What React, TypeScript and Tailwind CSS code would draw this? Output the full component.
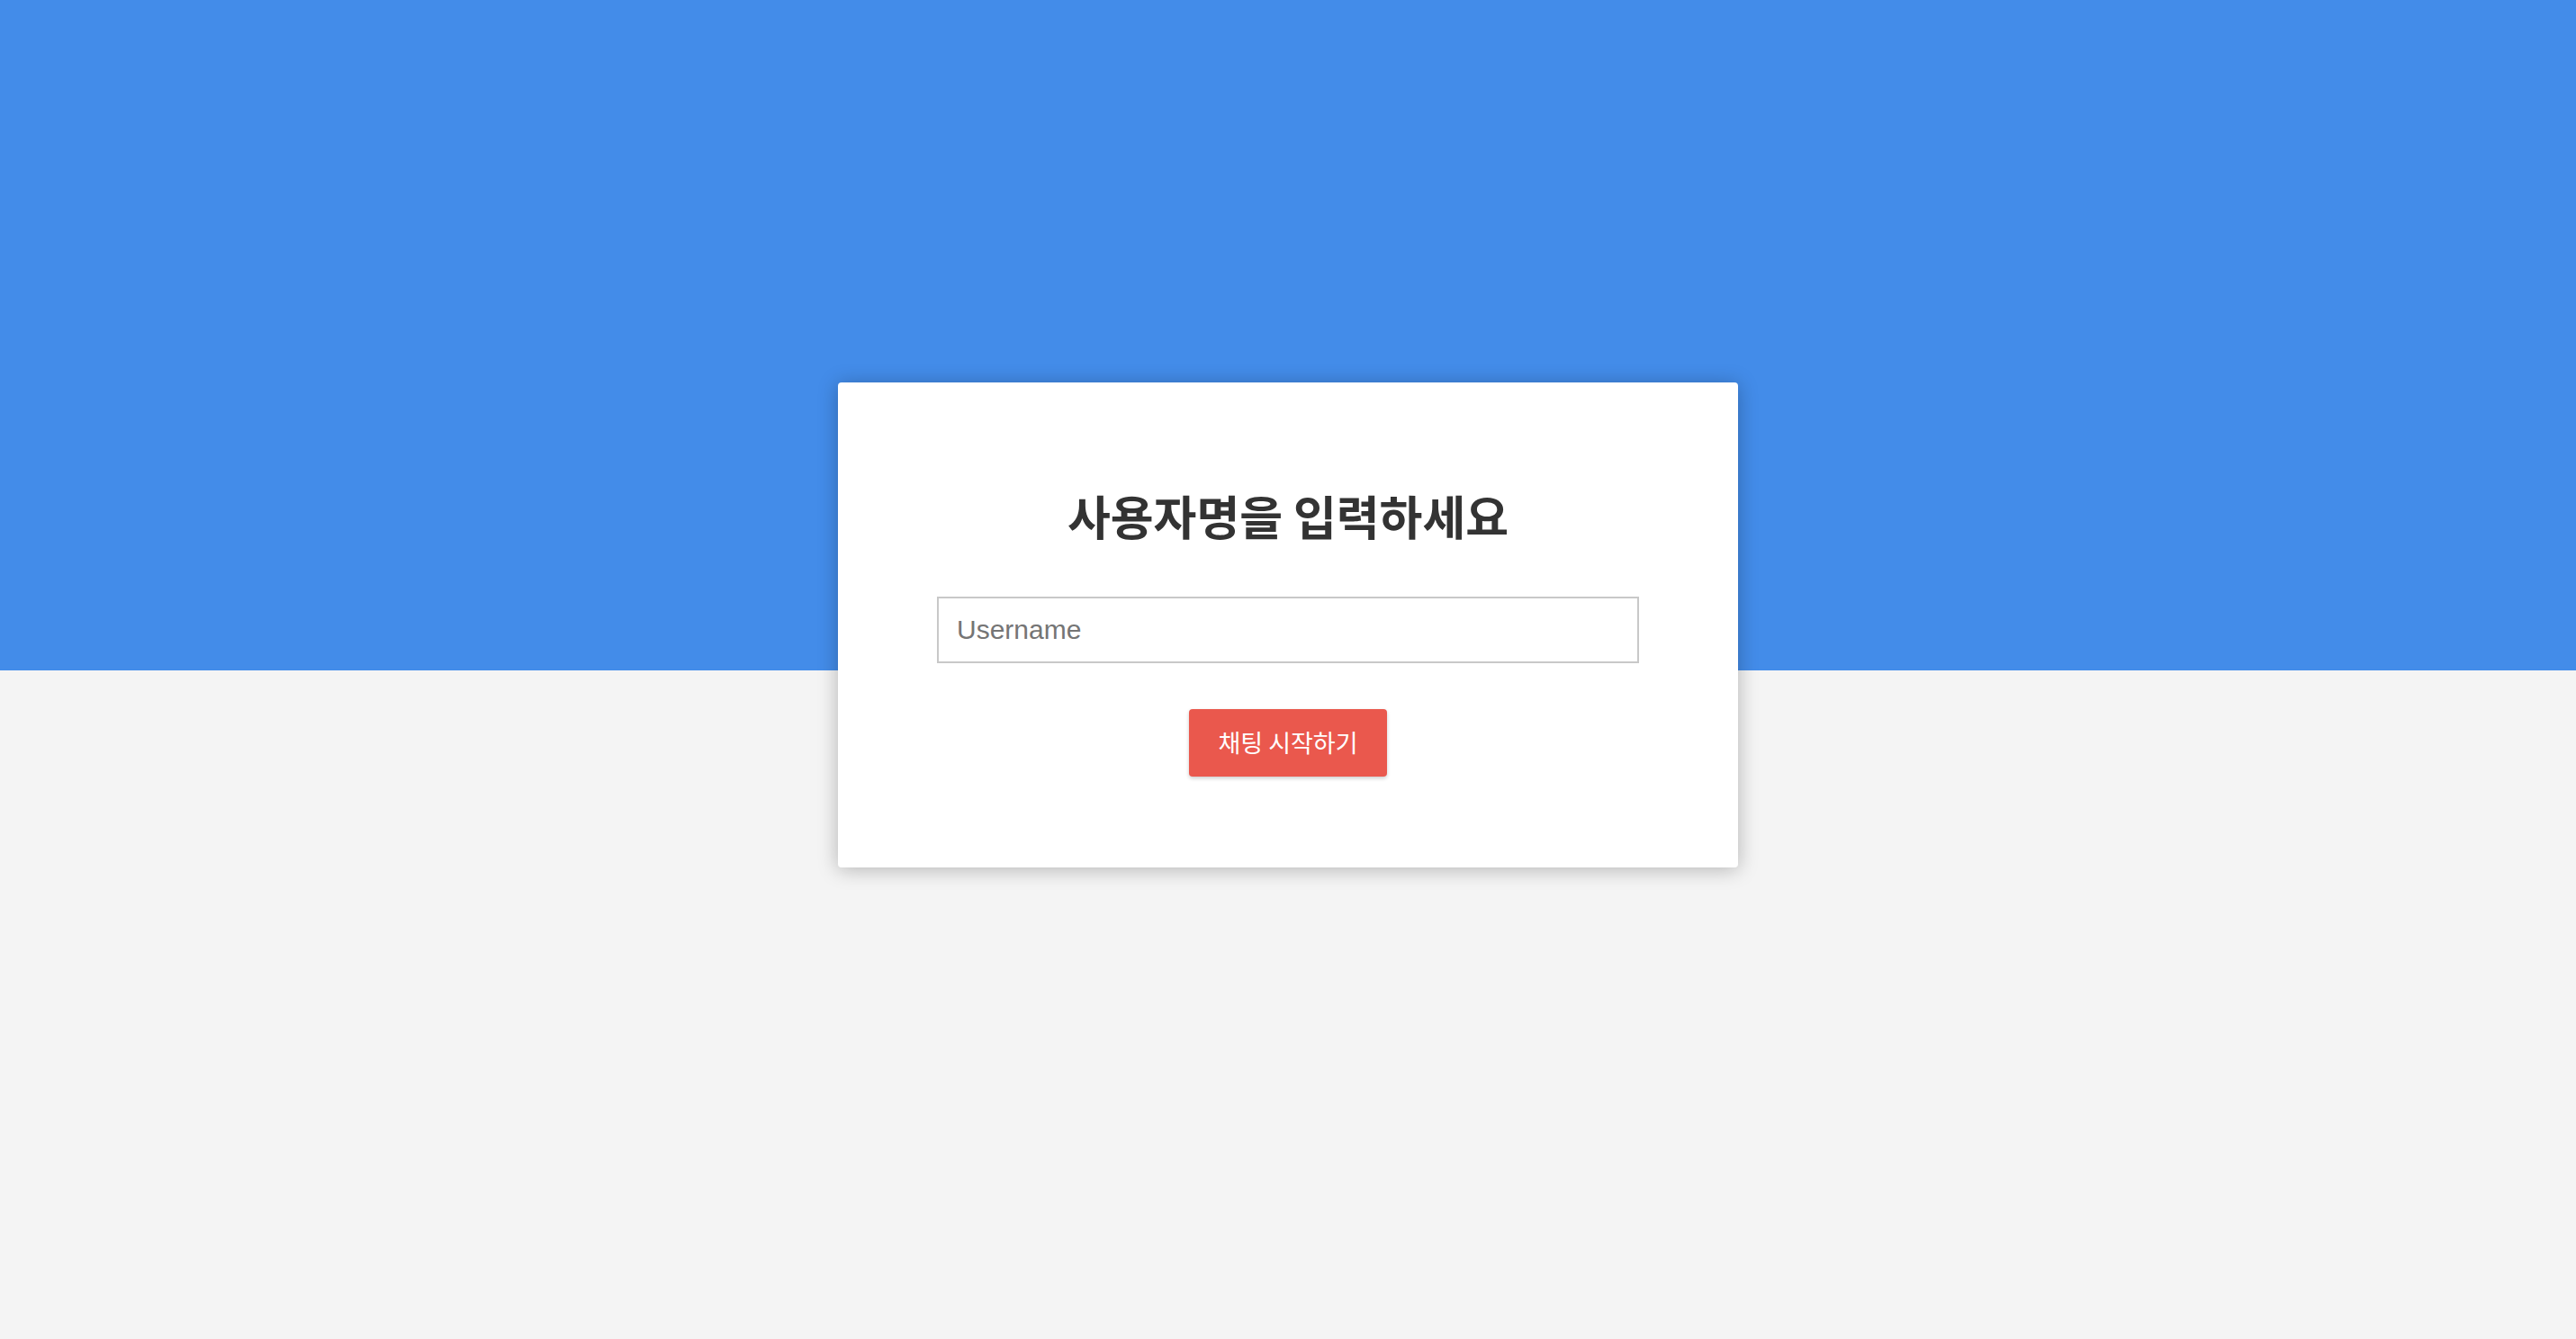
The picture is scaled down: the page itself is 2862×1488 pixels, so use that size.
import React, { useState } from 'react';

const App = () => {
  const [username, setUsername] = useState('');

  return (
    <div className="min-h-[1488px] w-full bg-[linear-gradient(to_bottom,#438ce9_0,#438ce9_745px,#f4f4f4_745px,#f4f4f4_100%)] pt-[425px] font-['Noto_Sans_CJK_KR',sans-serif]">
      <div className="mx-auto flex h-[539px] w-[1000px] flex-col items-center rounded-[4px] bg-white px-[110px] pt-[122px] shadow-[0_2px_22px_rgba(0,0,0,0.27)]">
        <h1 className="text-center text-[52px] font-bold leading-none text-[#333333] font-['Noto_Sans_CJK_KR',sans-serif]">
          사용자명을 입력하세요
        </h1>
        <input
          type="text"
          value={username}
          onChange={(e) => setUsername(e.target.value)}
          placeholder="Username"
          className="mt-[64px] h-[74px] w-full border-2 border-[#c8c8c8] bg-white px-[20px] text-[30px] text-[#333] outline-none placeholder:text-[#757575] font-['Liberation_Sans',Arial,sans-serif]"
        />
        <button className="mt-[51px] h-[75px] w-[220px] rounded-[4px] bg-[#ea584d] text-[27px] text-white shadow-[0_2px_4px_rgba(0,0,0,0.2)] font-['Noto_Sans_CJK_KR',sans-serif]">
          채팅 시작하기
        </button>
      </div>
    </div>
  );
};

export default App;
